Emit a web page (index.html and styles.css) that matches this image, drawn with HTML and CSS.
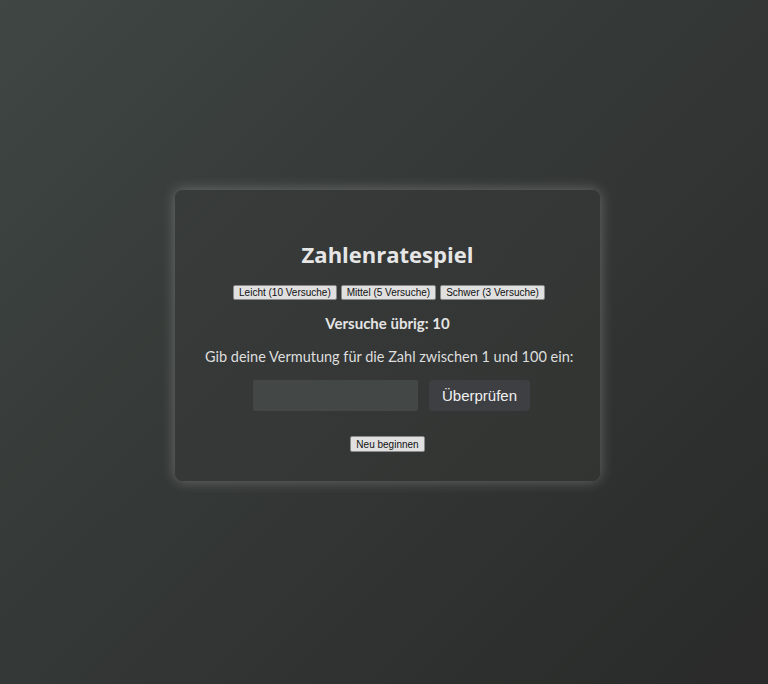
FILE: index.html
```html
<!DOCTYPE html>
<html lang="de">
<head>
<meta charset="utf-8">
<title>Zahlenratespiel</title>
<link rel="stylesheet" href="styles.css">
</head>
<body>
<main class="card">
  <h1 class="title">Zahlenratespiel</h1>
  <div class="levels">
    <button class="small-btn">Leicht (10 Versuche)</button>
    <button class="small-btn">Mittel (5 Versuche)</button>
    <button class="small-btn">Schwer (3 Versuche)</button>
  </div>
  <p class="attempts">Versuche übrig: 10</p>
  <p class="prompt">Gib deine Vermutung für die Zahl zwischen 1 und 100 ein:</p>
  <div class="guess-row">
    <input class="guess-input" type="number">
    <button class="check-btn">Überprüfen</button>
  </div>
  <div class="restart">
    <button class="small-btn restart-btn">Neu beginnen</button>
  </div>
</main>
</body>
</html>
```

FILE: styles.css
```css
html, body {
  margin: 0;
  height: 100%;
}
body {
  background: linear-gradient(135deg, #3f4643 0%, #333735 50%, #292a29 100%);
  display: flex;
  align-items: flex-start;
  justify-content: center;
  font-family: "Lato", "Open Sans", sans-serif;
  color: #e4e4e4;
}
.card {
  margin-top: 190px;
  margin-left: 7px;
  width: 365px;
  padding: 30px 30px 29px;
  border-radius: 8px;
  background: linear-gradient(135deg, #373b39 0%, #323432 100%);
  box-shadow: 0 0 14px rgba(255, 255, 255, 0.28);
  text-align: center;
}
.title {
  margin: 18px 0 15px;
  font-family: "Open Sans", "Lato", sans-serif;
  font-size: 22px;
  line-height: 32px;
  font-weight: 700;
  color: #e6e6e6;
}
.levels {
  display: flex;
  justify-content: center;
  gap: 4px;
  padding-left: 3px;
}
.small-btn {
  font-family: "Liberation Sans", Arial, sans-serif;
  font-size: 10px;
  line-height: 11px;
  padding: 0 5px;
  background: #e0e0e0;
  color: #111;
  border: 1px solid #8a8a8a;
  border-radius: 2px;
}
.levels .small-btn {
  height: 15px;
}
.attempts {
  margin: 13px 0 0;
  font-size: 15px;
  line-height: 20px;
  font-weight: 700;
}
.prompt {
  margin: 14px 0 0;
  font-size: 14.5px;
  line-height: 20px;
  white-space: nowrap;
  color: #dedede;
}
.guess-row {
  display: flex;
  justify-content: center;
  gap: 11px;
  margin-top: 13px;
  padding-left: 8px;
}
.guess-input {
  width: 165px;
  height: 31px;
  box-sizing: border-box;
  border: none;
  background: #434745;
  border-radius: 2px;
  outline: none;
}
.check-btn {
  width: 101px;
  height: 31px;
  border: none;
  border-radius: 4px;
  background: #3e3f43;
  color: #f0f0f0;
  font-family: "Liberation Sans", Arial, sans-serif;
  font-size: 15px;
}
.restart {
  margin-top: 25px;
  display: flex;
  justify-content: center;
}
.restart-btn {
  height: 16px;
}
```
